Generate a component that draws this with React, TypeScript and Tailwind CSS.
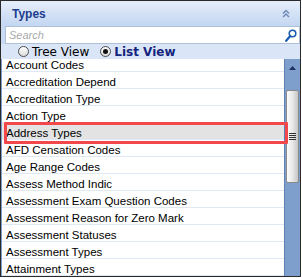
import React from "react";

const items = [
  "Account Codes",
  "Accreditation Depend",
  "Accreditation Type",
  "Action Type",
  "Address Types",
  "AFD Censation Codes",
  "Age Range Codes",
  "Assess Method Indic",
  "Assessment Exam Question Codes",
  "Assessment Reason for Zero Mark",
  "Assessment Statuses",
  "Assessment Types",
  "Attainment Types",
];

function Radio({ checked }: { checked?: boolean }) {
  return (
    <span className="flex h-[11px] w-[11px] items-center justify-center rounded-full border border-[#4d4d4d] bg-linear-to-b from-[#ffffff] to-[#dcdcdc]">
      {checked && <span className="h-[5px] w-[5px] rounded-full bg-[#111]" />}
    </span>
  );
}

export default function App() {
  return (
    <div className="relative flex h-[277px] w-[301px] flex-col overflow-hidden border border-[#2a2a2a] bg-white font-['Liberation_Sans',Arial,sans-serif]">
      {/* header */}
      <div className="flex h-[25px] shrink-0 items-center justify-between bg-linear-to-b from-[#e6eefa] to-[#c3d6f1] pl-[11px] pr-[10px]">
        <span className="text-[12px] font-bold text-[#1c3d8e]">Types</span>
        <svg width="8" height="9" viewBox="0 0 8 9" fill="none" stroke="#6d88b6" strokeWidth="1.4">
          <path d="M1 4.5 L4 1.5 L7 4.5" />
          <path d="M1 8 L4 5 L7 8" />
        </svg>
      </div>

      {/* search */}
      <div className="flex shrink-0 bg-[#c9dbf3] pl-[4px]">
        <div className="flex h-[18px] flex-1 items-center justify-between border border-[#aebfd8] bg-white pl-[3px] pr-[2px]">
          <span className="text-[11px] italic text-[#a9a9a9]">Search</span>
          <svg width="12" height="13" viewBox="0 0 12 13" fill="none" stroke="#1b5cb3">
            <circle cx="7.5" cy="4.5" r="3.3" strokeWidth="1.6" />
            <path d="M5.2 7 L1.2 11.8" strokeWidth="2.2" strokeLinecap="round" />
          </svg>
        </div>
      </div>

      {/* view toggle */}
      <div className="flex h-[15px] shrink-0 items-center bg-[#dae6f7] pl-[17px] font-['DejaVu_Sans',sans-serif] text-[12px] leading-none">
        <Radio />
        <span className="ml-[3px] text-black">Tree View</span>
        <span className="ml-[11px]">
          <Radio checked />
        </span>
        <span className="ml-[3px] font-bold text-[#15247c]">List View</span>
      </div>

      {/* list */}
      <div className="flex min-h-0 flex-1">
        <div className="min-w-0 flex-1 overflow-hidden border-l border-[#7f9dca]">
          <div className="-mt-[4px]">
            {items.map((name) => (
              <div
                key={name}
                className={`h-[17px] whitespace-nowrap border-b border-[#dfe8f5] pl-[4px] pt-[4px] text-[11.5px] leading-[13px] text-black ${
                  name === "Address Types" ? "bg-[#e3e3e3]" : ""
                }`}
              >
                {name}
              </div>
            ))}
          </div>
        </div>

        {/* scrollbar */}
        <div className="flex w-[16px] shrink-0 flex-col border-l border-[#5f80b3] bg-[#7e9ecb]">
          <div className="flex h-[31px] justify-center pt-[7px]">
            <svg width="7" height="4" viewBox="0 0 7 4">
              <path d="M0 4 L3.5 0 L7 4 Z" fill="#1f2f5e" />
            </svg>
          </div>
          <div className="ml-[1px] mr-[1px] flex h-[93px] items-center justify-center rounded-[2px] border border-[#8a8a8a] bg-linear-to-r from-[#fdfdfd] via-[#e8e8e8] to-[#c6c6c6]">
            <div className="flex w-[7px] flex-col gap-[1px]">
              <span className="h-[1px] bg-[#333]" />
              <span className="h-[1px] bg-[#333]" />
              <span className="h-[1px] bg-[#333]" />
              <span className="h-[1px] bg-[#333]" />
            </div>
          </div>
        </div>
      </div>

      {/* highlight annotation */}
      <div className="pointer-events-none absolute left-[3px] top-[121px] h-[22px] w-[284px] rounded-[1px] border-[3px] border-[#f2474b]" />
    </div>
  );
}
